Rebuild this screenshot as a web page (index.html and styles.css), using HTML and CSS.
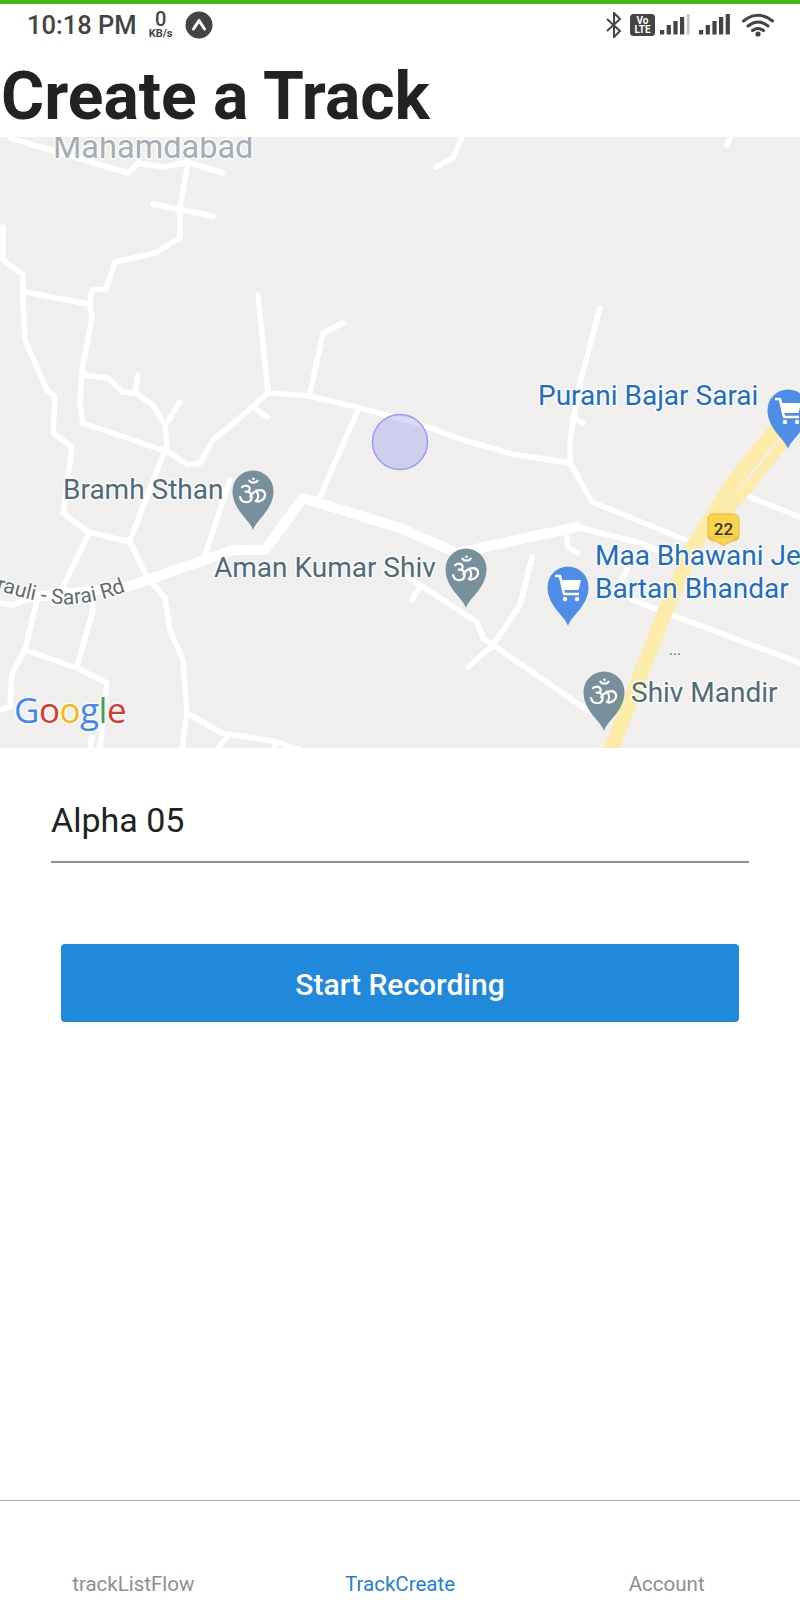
FILE: index.html
```html
<!DOCTYPE html>
<html lang="en">
<head>
<meta charset="utf-8">
<title>Create a Track</title>
<link rel="stylesheet" href="styles.css">
</head>
<body>
<div class="screen">
  <header class="status">
    <div class="status-left">
      <span class="time">10:18 PM</span>
      <span class="speed"><span class="speed-num">0</span><span class="speed-unit">KB/s</span></span>
      <svg class="expo" width="28" height="28" viewBox="0 0 28 28"><circle cx="14" cy="14" r="13.5" class="ic-fill"/><path d="M8.5 18 L14 9.5 L19.5 18" class="ic-white"/></svg>
    </div>
    <div class="status-right">
      <svg width="18" height="26" viewBox="0 0 18 26"><path d="M2 7 L15 19 L9 25 V1 L15 7 L2 19" class="ic-line"/></svg>
      <svg class="s-volte" width="25" height="22" viewBox="0 0 25 22"><rect width="25" height="22" rx="3.5" class="ic-fill"/><text x="12.5" y="9.5" class="volte-t">Vo</text><text x="12.5" y="19" class="volte-t">LTE</text></svg>
      <svg class="s-sig1" width="33" height="21" viewBox="0 0 33 21"><rect x="0" y="16" width="4.2" height="4.5" class="ic-fill"/><rect x="6.7" y="11" width="4.2" height="9.5" class="ic-fill"/><rect x="13.4" y="7" width="4.2" height="13.5" class="ic-fill"/><rect x="20" y="3" width="4.2" height="17.5" class="ic-fill"/><rect x="26.7" y="0" width="3" height="20.5" class="ic-dim"/></svg>
      <svg class="s-sig2" width="31" height="21" viewBox="0 0 31 21"><rect x="0" y="16" width="4.2" height="4.5" class="ic-fill"/><rect x="6.7" y="11" width="4.2" height="9.5" class="ic-fill"/><rect x="13.4" y="7" width="4.2" height="13.5" class="ic-fill"/><rect x="20" y="3" width="4.2" height="17.5" class="ic-fill"/><rect x="26.7" y="0" width="4.2" height="20.5" class="ic-fill"/></svg>
      <svg class="s-wifi" width="32" height="24" viewBox="0 0 32 24"><circle cx="16" cy="21" r="2.6" class="ic-fill"/><path d="M1.5 8 Q16 -3.5 30.5 8" class="ic-arc"/><path d="M6 13 Q16 5 26 13" class="ic-arc"/><path d="M10.5 17.5 Q16 13.5 21.5 17.5" class="ic-arc"/></svg>
    </div>
  </header>

  <h1 class="title">Create a Track</h1>

  <svg class="map" viewBox="0 137 800 611" width="800" height="611" role="img" aria-label="Map">
    <defs>
      <g id="pin-shape"><path d="M0 39 C-3 29 -20.5 19 -20.5 0 A20.5 20.5 0 1 1 20.5 0 C20.5 19 3 29 0 39 Z"/></g>
      <g id="om" transform="translate(0 2.5) scale(.92)">
        <path d="M-12 -7 C-6 -11 -1 -6 -5 -2 C0 0 0 9 -7 9.5 C-11 9.5 -13.5 7 -14 4 M-5 -2 H-8 M-3 3 C1 -4 11 -6 13 0 C14 7 6 10 3 8 M3 -3 C7 1 6 6 3 8 M-4 -14 C-2 -11 3 -11 5 -14" class="om-line"/>
        <circle cx="0.5" cy="-16" r="1.4" class="om-dot"/>
      </g>
      <g id="cart">
        <path d="M-13 -11 H-8 L-4 7 H11" class="cart-line"/>
        <path d="M-6 -7 H13 L10.5 3 H-4 Z" class="cart-fill"/>
        <circle cx="-3" cy="12" r="2.2" class="cart-fill"/>
        <circle cx="9" cy="12" r="2.2" class="cart-fill"/>
      </g>
    </defs>
    <rect x="0" y="137" width="800" height="611" class="land"/>

    <g class="road">
      <path d="M10 138 L128 173 L138 163 L163 167 L187 162 L223 173"/>
      <path d="M188 163 L180 207 V238 L155 253 L115 262 L106 289 L92 290 L90 305 L92 317 L82 370 L80 403 L83 423 L133 440 L170 453 L188 465 L200 463 L213 440 L235 422 L268 393"/>
      <path d="M153 204 L213 216"/>
      <path d="M3 227 V260 L23 275 V303 L25 340 L47 390 L55 397 L53 433 L72 447 L63 513 L88 532 L130 542 L145 573 L150 580 L165 598 L170 630 L183 660 L187 713 L182 748"/>
      <path d="M25 292 L88 304"/>
      <path d="M82 375 L108 378 L122 392 L135 393 L153 405 L165 425 L167 445 L130 540"/>
      <path d="M135 393 L138 375"/>
      <path d="M165 425 L180 402"/>
      <path d="M258 295 L268 392"/>
      <path d="M343 323 L323 333 L310 393"/>
      <path d="M268 393 L310 396 L360 408 L417 423 L463 440 L512 454 L570 463 L592 502 L693 543"/>
      <path d="M255 408 L267 417"/>
      <path d="M358 410 L320 497"/>
      <path d="M88 535 L63 587 L37 600 L25 650 L12 673 L10 707 L0 710"/>
      <path d="M25 650 L77 668 L107 683 L100 748"/>
      <path d="M77 667 L93 610 L92 600"/>
      <path d="M0 603 L13 605 L33 597"/>
      <path d="M230 480 L205 555"/>
      <path d="M190 715 L222 733 L277 742 L300 750"/>
      <path d="M227 737 L218 748"/>
      <path d="M275 742 V748"/>
      <path d="M92 737 L90 748"/>
      <path d="M600 308 L580 383 L570 440 V463"/>
      <path d="M573 417 L583 423"/>
      <path d="M750 497 L800 517"/>
      <path d="M632 600 L800 663"/>
      <path d="M567 537 L568 547 L578 553"/>
      <path d="M532 557 L520 605 L493 645 L468 667"/>
      <path d="M400 572 L477 622 L483 638 L587 710"/>
      <path d="M420 587 L412 600"/>
      <path d="M627 570 L620 582"/>
      <path d="M462 137 L453 158 L436 167"/>
      <path d="M730 137 L727 145"/>
      <path d="M577 527 L640 543 L672 556"/>
    </g>
    <path d="M33 597 L127 587 L233 550 H265 L303 498 L400 528 L457 553 L577 527" class="road-main"/>
    <path d="M800 405 L767 440 L733 483 L693 547 L663 617 L611 750" class="hw"/>
    <path d="M800 420 L773 457 L740 497 L715 525" class="hw hw-thin"/>

    <circle cx="400" cy="442" r="27.5" class="loc"/>

    <g class="label lb-grey">
      <text x="53" y="158" class="lb-big">Mahamdabad</text>
    </g>
    <g class="label lb-blue">
      <text x="538" y="405">Purani Bajar Sarai</text>
      <text x="595" y="565">Maa Bhawani Je</text>
      <text x="595" y="598">Bartan Bhandar</text>
    </g>
    <g class="label lb-slate">
      <text x="63" y="499">Bramh Sthan</text>
      <text x="214" y="577">Aman Kumar Shiv</text>
      <text x="631" y="702">Shiv Mandir</text>
    </g>
    <path id="rd" d="M-4 590 C20 597 50 606 73 604 C95 602 110 598 132 589" class="none"/>
    <text class="label lb-road"><textPath href="#rd">rauli - Sarai Rd</textPath></text>
    <text x="675" y="655" class="dots">...</text>

    <g transform="translate(253 491)"><use href="#pin-shape" class="pin-grey"/><use href="#om"/></g>
    <g transform="translate(466 569)"><use href="#pin-shape" class="pin-grey"/><use href="#om"/></g>
    <g transform="translate(604 692)"><use href="#pin-shape" class="pin-grey"/><use href="#om"/></g>
    <g transform="translate(568 587)"><use href="#pin-shape" class="pin-blue"/><use href="#cart"/></g>
    <g transform="translate(788 410)"><use href="#pin-shape" class="pin-blue"/><use href="#cart"/></g>

    <rect x="708" y="514" width="31" height="27" rx="5" class="shield"/>
    <path d="M708 537 L723.5 545.5 L739 537 Z" class="shield"/>
    <text x="723.5" y="535" class="shield-t">22</text>

    <text x="14" y="723" class="google"><tspan class="g-b">G</tspan><tspan class="g-r">o</tspan><tspan class="g-y">o</tspan><tspan class="g-b">g</tspan><tspan class="g-g">l</tspan><tspan class="g-r">e</tspan></text>
  </svg>

  <form class="form">
    <div class="field">Alpha 05</div>
    <button type="button" class="btn">Start Recording</button>
  </form>

  <nav class="tabs">
    <span class="tab">trackListFlow</span>
    <span class="tab tab-on">TrackCreate</span>
    <span class="tab">Account</span>
  </nav>
</div>
</body>
</html>
```
FILE: styles.css
```css
* { box-sizing: border-box; }
html, body { margin: 0; padding: 0; background: #fff; }
body { font-family: Roboto, "Liberation Sans", sans-serif; color: #222; }
.screen { width: 800px; height: 1600px; display: flex; flex-direction: column; overflow: hidden; }

/* status bar */
.status { height: 60px; border-top: 4px solid #43b90f; display: flex; justify-content: space-between; align-items: flex-start; padding: 8px 26px 0 27px; }
.status-left { display: flex; align-items: center; height: 26px; }
.time { font-size: 25.5px; font-weight: 500; color: #444; line-height: 26px; }
.speed { display: flex; flex-direction: column; align-items: center; margin-left: 10px; width: 28px; color: #444; }
.speed-num { font-size: 20px; line-height: 17px; font-weight: 500; }
.speed-unit { font-size: 11px; line-height: 11px; font-weight: 700; }
.expo { margin-left: 10px; }
.status-right { display: flex; align-items: flex-start; }
.s-volte { margin: 2px 0 0 7px; }
.s-sig1 { margin: 2px 0 0 5px; }
.s-sig2 { margin: 2px 0 0 6px; }
.s-wifi { margin: 1px 0 0 12px; }
.ic-fill { fill: #444; }
.ic-dim { fill: #c9c9c9; }
.ic-white { fill: none; stroke: #fff; stroke-width: 3; stroke-linecap: round; stroke-linejoin: round; }
.ic-line { fill: none; stroke: #444; stroke-width: 2; stroke-linejoin: miter; }
.ic-arc { fill: none; stroke: #444; stroke-width: 3; stroke-linecap: round; }
.volte-t { fill: #fff; font-size: 10px; font-weight: 700; text-anchor: middle; }

/* title */
.title { margin: 0; height: 77px; font-size: 66px; line-height: 73px; font-weight: 700; color: #222; padding-left: 1px; white-space: nowrap; }

/* map */
.map { display: block; flex: none; }
.land { fill: #f0efee; }
.road, .road-main, .hw { fill: none; stroke-linecap: round; stroke-linejoin: round; }
.road { stroke: #fff; stroke-width: 5.5; }
.road-main { stroke: #fff; stroke-width: 10; }
.hw { stroke: #fdeba9; stroke-width: 15; stroke-linecap: butt; }
.hw-thin { stroke-width: 10; }
.none { fill: none; }
.loc { fill: rgba(130, 130, 235, .3); stroke: #9c9cf0; stroke-width: 1.5; }
.label text, .lb-road { font-size: 28px; paint-order: stroke; stroke: rgba(255, 255, 255, .85); stroke-width: 3px; stroke-linejoin: round; }
.lb-grey { fill: #a3adb7; }
.label .lb-big { font-size: 32.5px; }
.lb-blue { fill: #1c6dc6; }
.lb-slate { fill: #4f6a78; }
.label.lb-road { fill: #5f6b72; font-size: 21px; }
.dots { fill: #5878a0; font-size: 16px; text-anchor: middle; }
.pin-grey { fill: #78909c; }
.pin-blue { fill: #4e8ee8; }
.om-line { fill: none; stroke: #fff; stroke-width: 2.4; stroke-linecap: round; stroke-linejoin: round; }
.om-dot { fill: #fff; }
.cart-line { fill: none; stroke: #fff; stroke-width: 2.6; stroke-linejoin: round; }
.cart-fill { fill: #fff; }
.shield { fill: #fbd44b; stroke: #e9b93a; stroke-width: 1; }
.shield-t { fill: #333; font-size: 17px; font-weight: 500; text-anchor: middle; }
.google { font-size: 35px; font-weight: 500; letter-spacing: -.5px; paint-order: stroke; stroke: rgba(255, 255, 255, .8); stroke-width: 3px; font-family: "Open Sans", Roboto, sans-serif; }
.g-b { fill: #4285f4; }
.g-r { fill: #d9392f; }
.g-y { fill: #f2b90f; }
.g-g { fill: #34a853; }

/* form */
.form { padding: 0 51px; display: flex; flex-direction: column; }
.field { height: 115px; border-bottom: 2px solid #86939e; font-size: 34px; line-height: 40px; padding-top: 52px; color: #222; }
.btn { margin: 81px 10px 0; height: 78px; background: #2089dc; border: 0; border-radius: 4px; color: #fff; font: 500 30px/34px Roboto, sans-serif; padding: 3px 0 0; }

/* tabs */
.tabs { margin-top: auto; height: 100px; border-top: 1px solid #b0b0b0; display: flex; align-items: flex-end; padding-bottom: 4px; }
.tab { flex: 1; text-align: center; font-size: 20.5px; line-height: 24px; color: #8e8e93; }
.tab-on { color: #1f7fd6; }
```
